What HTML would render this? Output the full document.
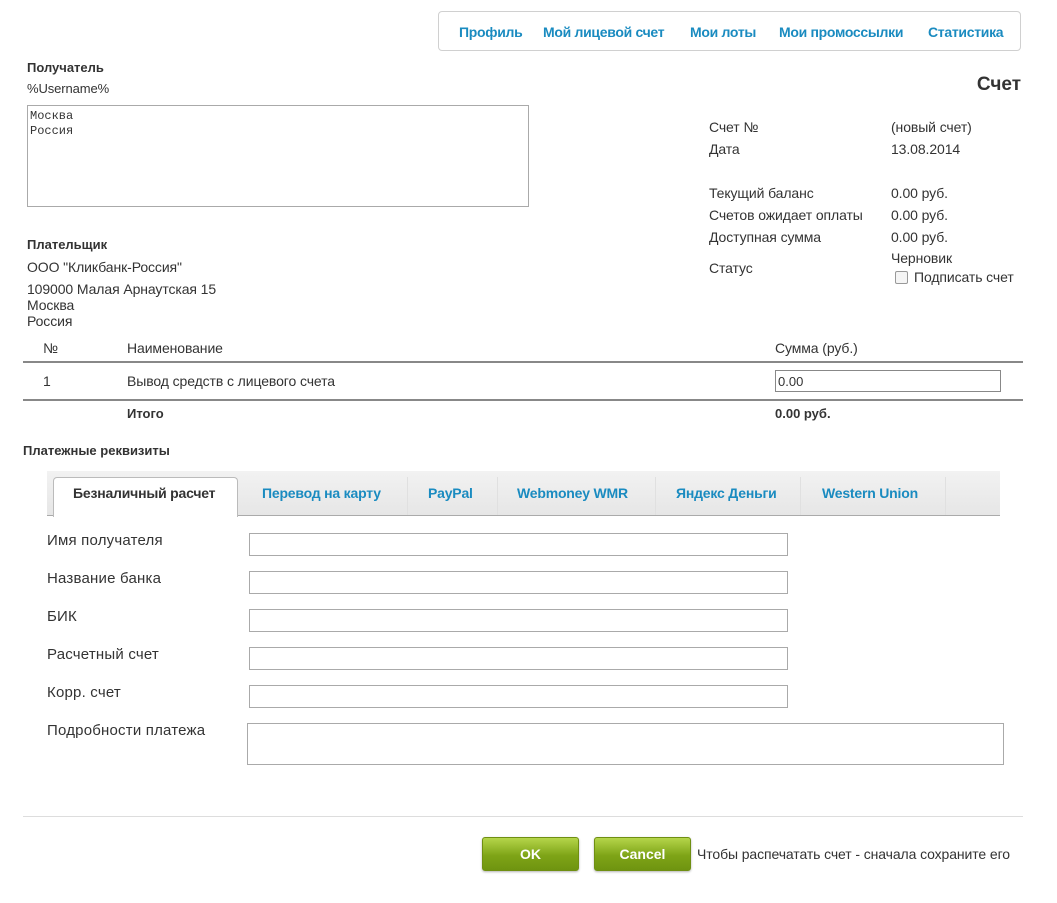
<!DOCTYPE html>
<html><head><meta charset="utf-8"><style>
body{margin:0;width:1057px;height:903px;background:#fff;font-family:"Liberation Sans",sans-serif;color:#333;position:relative;overflow:hidden}
.a{position:absolute;white-space:nowrap}
.nav{left:438px;top:11px;width:583px;height:40px;border:1px solid #d0d0d0;border-radius:4px;box-sizing:border-box}
.nav span{position:absolute;top:12px;font-size:14px;font-weight:bold;color:#1a8bc0;letter-spacing:-0.3px}
.b{font-weight:bold;font-size:13px;color:#333}
.t{font-size:14px;color:#333;letter-spacing:-0.1px}
.inp{position:absolute;border:1px solid #aaa;background:#fff;box-sizing:border-box}
.lbl{font-size:15px;color:#333;letter-spacing:0.2px}
.tab{position:absolute;top:485px;font-size:14px;font-weight:bold;color:#1a8bc0;letter-spacing:-0.2px}
.sep{position:absolute;top:477px;width:1px;height:38px;background:#e0e0e0}
.btn{position:absolute;top:837px;width:97px;height:34px;border:1px solid #6f8f12;border-radius:3px;background:linear-gradient(#b5d54a,#7ea417 55%,#6f9410);color:#fff;font-weight:bold;font-size:14px;text-align:center;line-height:33px;box-sizing:border-box;box-shadow:0 1px 2px rgba(0,0,0,.3)}
</style></head><body>
<div class="a nav">
<span style="left:20px">Профиль</span>
<span style="left:104px">Мой лицевой счет</span>
<span style="left:251px">Мои лоты</span>
<span style="left:340px">Мои промоссылки</span>
<span style="left:489px">Статистика</span>
</div>
<div class="a b" style="left:27px;top:60px">Получатель</div>
<div class="a t" style="left:27px;top:81px;font-size:13px">%Username%</div>
<div class="inp" style="left:27px;top:105px;width:502px;height:102px;font-family:'Liberation Mono',monospace;font-size:12px;padding:3px 2px;line-height:15px">Москва<br>Россия</div>
<div class="a" style="right:36px;top:74px;font-size:19px;font-weight:bold;color:#333">Счет</div>
<div class="a t" style="left:709px;top:119px">Счет №</div><div class="a t" style="left:891px;top:119px">(новый счет)</div>
<div class="a t" style="left:709px;top:141px">Дата</div><div class="a t" style="left:891px;top:141px">13.08.2014</div>
<div class="a t" style="left:709px;top:185px">Текущий баланс</div><div class="a t" style="left:891px;top:185px">0.00 руб.</div>
<div class="a t" style="left:709px;top:207px">Счетов ожидает оплаты</div><div class="a t" style="left:891px;top:207px">0.00 руб.</div>
<div class="a t" style="left:709px;top:229px">Доступная сумма</div><div class="a t" style="left:891px;top:229px">0.00 руб.</div>
<div class="a t" style="left:709px;top:260px">Статус</div><div class="a t" style="left:891px;top:250px">Черновик</div>
<div class="a" style="left:895px;top:271px;width:11px;height:11px;border:1px solid #999;border-radius:2px;background:#f5f5f5"></div>
<div class="a t" style="left:914px;top:269px">Подписать счет</div>
<div class="a b" style="left:27px;top:237px">Плательщик</div>
<div class="a t" style="left:27px;top:259px">ООО "Кликбанк-Россия"</div>
<div class="a t" style="left:27px;top:281px;line-height:16px">109000 Малая Арнаутская 15<br>Москва<br>Россия</div>
<div class="a t" style="left:43px;top:340px">№</div>
<div class="a t" style="left:127px;top:340px">Наименование</div>
<div class="a t" style="left:775px;top:340px">Сумма (руб.)</div>
<div class="a" style="left:23px;top:361px;width:1000px;height:2px;background:#888"></div>
<div class="a t" style="left:43px;top:373px">1</div>
<div class="a t" style="left:127px;top:373px">Вывод средств с лицевого счета</div>
<div class="inp" style="left:775px;top:370px;width:226px;height:22px;font-size:13px;padding:3px 2px;border-color:#888">0.00</div>
<div class="a" style="left:23px;top:399px;width:1000px;height:2px;background:#888"></div>
<div class="a b" style="left:127px;top:406px">Итого</div>
<div class="a b" style="left:775px;top:406px">0.00 руб.</div>
<div class="a b" style="left:23px;top:443px">Платежные реквизиты</div>
<div class="a" style="left:47px;top:471px;width:953px;height:44px;background:linear-gradient(#f2f2f2,#e6e6e6)"></div>
<div class="a" style="left:47px;top:515px;width:953px;height:1px;background:#aaa"></div>
<div class="a" style="left:53px;top:477px;width:183px;height:39px;background:#fff;border:1px solid #bbb;border-bottom:none;border-radius:4px 4px 0 0"></div>
<div class="tab" style="left:73px;color:#333">Безналичный расчет</div>
<div class="tab" style="left:262px">Перевод на карту</div>
<div class="tab" style="left:428px">PayPal</div>
<div class="tab" style="left:517px">Webmoney WMR</div>
<div class="tab" style="left:676px">Яндекс Деньги</div>
<div class="tab" style="left:822px">Western Union</div>
<div class="sep" style="left:407px"></div><div class="sep" style="left:497px"></div><div class="sep" style="left:655px"></div><div class="sep" style="left:800px"></div><div class="sep" style="left:945px"></div>
<div class="a lbl" style="left:47px;top:532px">Имя получателя</div><div class="inp" style="left:249px;top:533px;width:539px;height:23px"></div>
<div class="a lbl" style="left:47px;top:570px">Название банка</div><div class="inp" style="left:249px;top:571px;width:539px;height:23px"></div>
<div class="a lbl" style="left:47px;top:608px">БИК</div><div class="inp" style="left:249px;top:609px;width:539px;height:23px"></div>
<div class="a lbl" style="left:47px;top:646px">Расчетный счет</div><div class="inp" style="left:249px;top:647px;width:539px;height:23px"></div>
<div class="a lbl" style="left:47px;top:684px">Корр. счет</div><div class="inp" style="left:249px;top:685px;width:539px;height:23px"></div>
<div class="a lbl" style="left:47px;top:722px">Подробности платежа</div><div class="inp" style="left:247px;top:723px;width:757px;height:42px"></div>
<div class="a" style="left:23px;top:816px;width:1000px;height:1px;background:#ddd"></div>
<div class="btn" style="left:482px">OK</div>
<div class="btn" style="left:594px">Cancel</div>
<div class="a t" style="left:697px;top:846px">Чтобы распечатать счет - сначала сохраните его</div>
</body></html>
